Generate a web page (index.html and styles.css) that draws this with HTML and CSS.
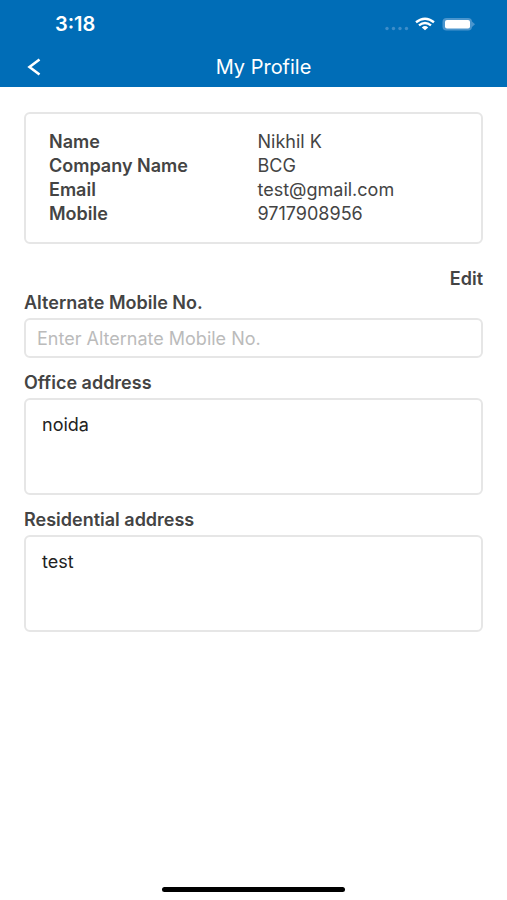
FILE: index.html
```html
<!DOCTYPE html>
<html lang="en">
<head>
<meta charset="utf-8">
<meta name="viewport" content="width=device-width, initial-scale=1">
<title>My Profile</title>
<link rel="stylesheet" href="styles.css">
</head>
<body>
<header class="top">
  <div class="status">
    <span class="time">3:18</span>
    <svg class="status-icons" width="92" height="20" viewBox="0 0 92 20" aria-hidden="true">
      <g fill="#3d8dc9"><circle cx="4" cy="14.500" r="1.700"/><circle cx="10.500" cy="14.500" r="1.700"/><circle cx="17" cy="14.500" r="1.700"/><circle cx="23.500" cy="14.500" r="1.700"/></g>
      <g fill="none" stroke="#fff" stroke-width="2.400">
        <path d="M33 8.200Q42 1.200 51 8.200"/>
        <path d="M36 11.400Q42 6.600 48 11.400"/>
      </g>
      <path d="M38.800 13.400Q42 10.800 45.200 13.400L42 16.300Z" fill="#fff"/>
      <rect x="59.500" y="4" width="29.500" height="12.500" rx="4" fill="#4a95cd"/>
      <rect x="62" y="6" width="25" height="8.500" rx="2" fill="#fff"/>
      <path d="M89 7.500L92 10.200L89 13Z" fill="#4a95cd"/>
    </svg>
  </div>
  <div class="nav">
    <button class="back" type="button" aria-label="Back">
      <svg width="14" height="18" viewBox="0 0 14 18" aria-hidden="true"><path d="M12.500 1.500L2.500 9L12.500 16.500" fill="none" stroke="#fff" stroke-width="2.600"/></svg>
    </button>
    <h1 class="title">My Profile</h1>
  </div>
</header>
<main class="content">
  <dl class="card">
    <dt>Name</dt><dd>Nikhil K</dd>
    <dt>Company Name</dt><dd>BCG</dd>
    <dt>Email</dt><dd>test@gmail.com</dd>
    <dt>Mobile</dt><dd>9717908956</dd>
  </dl>
  <form class="form">
    <button class="edit" type="button">Edit</button>
    <div class="field">
      <label for="alt">Alternate Mobile No.</label>
      <input class="box" id="alt" type="tel" placeholder="Enter Alternate Mobile No.">
    </div>
    <div class="field">
      <label for="office">Office address</label>
      <textarea class="box area" id="office">noida</textarea>
    </div>
    <div class="field">
      <label for="home">Residential address</label>
      <textarea class="box area" id="home">test</textarea>
    </div>
  </form>
</main>
<footer class="home-bar"><div class="home-indicator"></div></footer>
</body>
</html>
```
FILE: styles.css
```css
* {
  box-sizing: border-box;
}

body {
  margin: 0;
  min-height: 100vh;
  display: flex;
  flex-direction: column;
  background: #fff;
  color: #444;
  font: 18px/24px Inter, "Liberation Sans", sans-serif;
}

button,
input,
textarea {
  font: inherit;
}

.top {
  background: #006db7;
  color: #fff;
}

.status {
  height: 48px;
  padding: 0 32px 0 55px;
  display: flex;
  align-items: center;
  justify-content: space-between;
}

.time {
  font-size: 20px;
  font-weight: 600;
}

.status-icons {
  display: block;
}

.nav {
  height: 39px;
  padding: 0 24px 2px;
  display: grid;
  grid-template-columns: 20px 1fr;
  align-items: center;
}

.back {
  padding: 0;
  border: 0;
  background: none;
  display: flex;
  justify-content: center;
}

.title {
  margin: 0;
  text-align: center;
  font-size: 20px;
  font-weight: 400;
}

.content {
  flex: 1;
  padding: 25px 24px;
}

.card {
  margin: 0;
  padding: 16px 23px;
  border: 2px solid #e6e6e6;
  border-radius: 6px;
  display: grid;
  grid-template-columns: 1fr 1fr;
  column-gap: 8px;
}

.card dt {
  font-weight: 600;
}

.card dd {
  margin: 0;
}

.form {
  margin-top: 23px;
  display: flex;
  flex-direction: column;
}

.edit {
  align-self: flex-end;
  padding: 0;
  border: 0;
  background: none;
  color: inherit;
  font-weight: 600;
}

.field {
  display: flex;
  flex-direction: column;
  gap: 3px;
  margin-bottom: 13px;
}

.field label {
  font-weight: 600;
}

.box {
  width: 100%;
  height: 40px;
  padding: 0 11px;
  border: 2px solid #e6e6e6;
  border-radius: 6px;
  background: #fff;
  color: #222;
}

.box::placeholder {
  color: #bbb;
  opacity: 1;
}

.area {
  height: 97px;
  padding: 13px 16px;
  resize: none;
}

.home-bar {
  padding-bottom: 8px;
}

.home-indicator {
  width: 36%;
  height: 5px;
  margin: 0 auto;
  border-radius: 3px;
  background: #000;
}
```
